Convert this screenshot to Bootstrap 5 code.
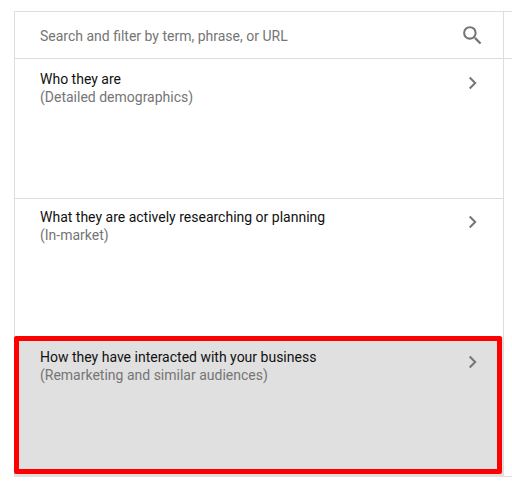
<!DOCTYPE html>
<html lang="en">
<head>
<meta charset="utf-8">
<meta name="viewport" content="width=device-width, initial-scale=1">
<title>Audiences</title>
<link href="https://cdn.jsdelivr.net/npm/bootstrap@5.3.0/dist/css/bootstrap.min.css" rel="stylesheet">
<style>
body{font-family:Roboto,"Liberation Sans",sans-serif;font-size:14px;line-height:18px;color:#111}
.picker{padding:11px 0 0 14px;height:477px}
.panel{width:490px;border:1px solid #dedede;border-bottom:0}
.side-panel{border-top:1px solid #dedede;border-bottom:1px solid #dedede}
.search-row{height:47px;border-bottom:1px solid #dedede}
.search-box{padding:1px 18px 0 25px}
.search-input{color:#757575;background:transparent}
.search-input::placeholder{color:#757575;opacity:1}
.option{padding:11px 24px 0 25px}
.option-a{height:140px;border-bottom:1px solid #dedede}
.option-b{height:138px;padding-top:9px}
.option-c{height:140px;background:#e0e0e0}
.muted{color:#757575}
.chev{margin-top:6px}
.option-b .chev,.option-c .chev{margin-top:7px}
.highlight{left:-1px;top:-1px;width:488px;height:138px;border:5px solid #f00;border-radius:2px}
</style>
</head>
<body class="bg-white">
<main class="picker d-flex">
  <section class="panel flex-shrink-0">
    <div class="search-row search-box d-flex align-items-center justify-content-between">
      <input class="search-input border-0 p-0 flex-grow-1" type="text" placeholder="Search and filter by term, phrase, or URL" aria-label="Search">
      <svg width="25" height="25" viewBox="0 0 24 24" fill="#757575" aria-hidden="true"><path d="M15.5 14h-.79l-.28-.27A6.47 6.47 0 0 0 16 9.5 6.5 6.5 0 1 0 9.5 16c1.61 0 3.09-.59 4.23-1.57l.27.28v.79l5 4.99L20.49 19l-4.99-5zm-6 0C7.01 14 5 11.99 5 9.5S7.01 5 9.5 5 14 7.01 14 9.5 11.99 14 9.5 14z"/></svg>
    </div>
    <div class="option option-a d-flex justify-content-between align-items-start">
      <div><div>Who they are</div><div class="muted">(Detailed demographics)</div></div>
      <svg class="chev" width="12" height="14" viewBox="0 0 12 14" fill="none" stroke="#757575" stroke-width="2" aria-hidden="true"><path d="M2.7 1.5 8.2 7l-5.5 5.5"/></svg>
    </div>
    <div class="option option-b d-flex justify-content-between align-items-start">
      <div><div>What they are actively researching or planning</div><div class="muted">(In-market)</div></div>
      <svg class="chev" width="12" height="14" viewBox="0 0 12 14" fill="none" stroke="#757575" stroke-width="2" aria-hidden="true"><path d="M2.7 1.5 8.2 7l-5.5 5.5"/></svg>
    </div>
    <div class="option option-c position-relative d-flex justify-content-between align-items-start">
      <div><div>How they have interacted with your business</div><div class="muted">(Remarketing and similar audiences)</div></div>
      <svg class="chev" width="12" height="14" viewBox="0 0 12 14" fill="none" stroke="#757575" stroke-width="2" aria-hidden="true"><path d="M2.7 1.5 8.2 7l-5.5 5.5"/></svg>
      <div class="highlight position-absolute"></div>
    </div>
  </section>
  <section class="side-panel flex-grow-1">
    <div class="search-row"></div>
  </section>
</main>
<script src="https://cdn.jsdelivr.net/npm/bootstrap@5.3.0/dist/js/bootstrap.bundle.min.js"></script>
</body>
</html>
